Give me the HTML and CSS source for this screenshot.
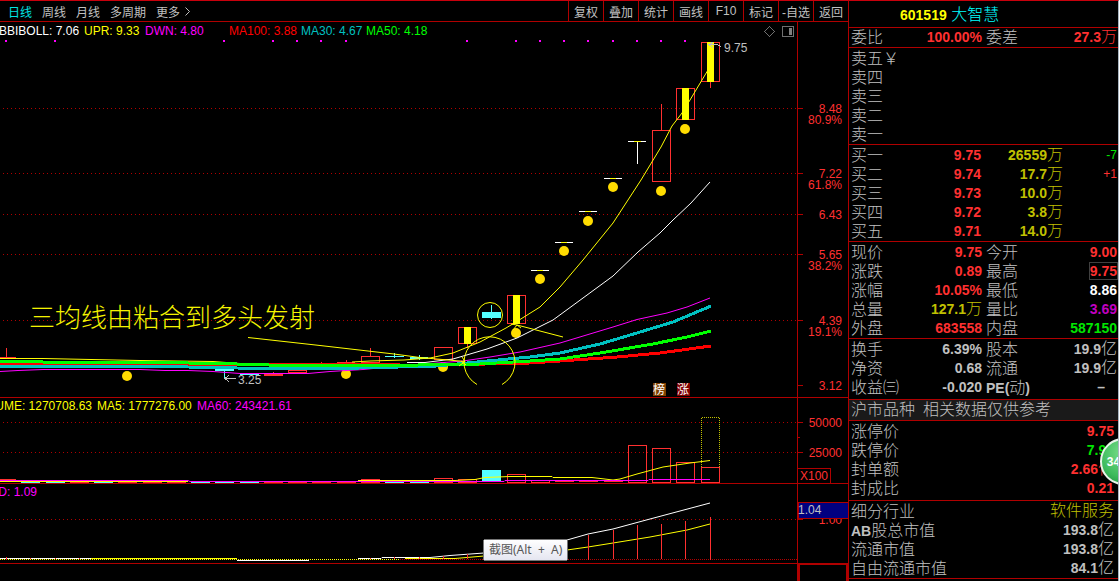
FILE: index.html
```html
<!DOCTYPE html>
<html lang="zh-CN">
<head>
<meta charset="utf-8">
<title>601519 大智慧</title>
<link rel="stylesheet" href="styles.css">
</head>
<body>
<div class="app">
<main class="left">
  <header class="toolbar">
    <nav class="periods">
      <button type="button" class="period active">日线</button>
      <button type="button" class="period">周线</button>
      <button type="button" class="period">月线</button>
      <button type="button" class="period">多周期</button>
      <button type="button" class="period more">更多<svg class="chevron" viewBox="0 0 5 9"><path d="M0.5 0.5L4.5 4.5L0.5 8.5"/></svg></button>
    </nav>
    <nav class="tools">
      <button type="button">复权</button>
      <button type="button">叠加</button>
      <button type="button">统计</button>
      <button type="button">画线</button>
      <button type="button">F10</button>
      <button type="button">标记</button>
      <button type="button">-自选</button>
      <button type="button">返回</button>
    </nav>
  </header>

  <svg class="chart" viewBox="0 22 848 375">
    <g class="grid">
      <path d="M3 108.5H797M3 173.5H797M3 214.5H797M3 254.5H797M3 320.5H797"/>
    </g>
    <path class="frame" d="M797.5 22V397M798 108.5H803M798 173.5H803M798 214.5H803M798 254.5H803M798 320.5H803M798 385.5H803"/>
    <g class="axis">
      <text x="842" y="113">8.48</text><text x="842" y="124">80.9%</text>
      <text x="842" y="178">7.22</text><text x="842" y="189">61.8%</text>
      <text x="842" y="219">6.43</text>
      <text x="842" y="259">5.65</text><text x="842" y="270">38.2%</text>
      <text x="842" y="325">4.39</text><text x="842" y="336">19.1%</text>
      <text x="842" y="390">3.12</text>
    </g>
    <g class="legend">
      <text class="white" x="-1" y="35">BBIBOLL: 7.06</text>
      <text class="yellow" x="84" y="35">UPR: 9.33</text>
      <text class="magenta" x="145" y="35">DWN: 4.80</text>
      <text class="red" x="229" y="35">MA100: 3.88</text>
      <text class="teal" x="301" y="35">MA30: 4.67</text>
      <text class="lime" x="366" y="35">MA50: 4.18</text>
    </g>
    <path class="marks" d="M5 41h2M54 41h2M223 41h2M272 41h2M296 41h2M320 41h2M345 41h2M466 41h2M515 41h2M539 41h2M563 41h2M587 41h2M612 41h2M636 41h2M660 41h2M684 41h2"/>
    <path class="tool-icon" d="M764.5 31.5L769.5 26.5L774.5 31.5L769.5 36.5Z"/>
    <rect class="tool-icon" x="782.5" y="26.5" width="11" height="10" rx="1"/>
    <rect class="tool-fill" x="789" y="28" width="3" height="7"/>

    <g class="dots">
      <circle cx="127" cy="376" r="5"/><circle cx="346" cy="374" r="5"/><circle cx="443" cy="367" r="5"/>
      <circle cx="516" cy="333" r="5"/><circle cx="540" cy="279" r="5"/><circle cx="564" cy="251" r="5"/>
      <circle cx="588" cy="221" r="5"/><circle cx="613" cy="187" r="5"/><circle cx="661" cy="191" r="5"/><circle cx="685" cy="129" r="5"/>
    </g>
    <g class="up">
      <path d="M6.5 348V357M0 357.5H16M337 362.5H355M346.5 360V362M370.5 348V356M467.5 344V348M661.5 104V130M710.5 82V88M321.5 362V364M273.5 372V374"/>
      <rect x="288.5" y="370.5" width="18" height="2"/>
      <rect x="361.5" y="356.5" width="18" height="6"/>
      <rect x="434.5" y="347.5" width="18" height="12"/>
      <rect x="458.5" y="327.5" width="18" height="16"/>
      <rect x="507.5" y="295.5" width="18" height="28"/>
      <rect x="652.5" y="130.5" width="18" height="51"/>
      <rect x="676.5" y="88.5" width="18" height="31"/>
      <rect x="701.5" y="42.5" width="18" height="39"/>
    </g>
    <rect class="up-fill" x="264" y="374" width="19" height="2"/>
    <g class="down">
      <rect x="215" y="369" width="19" height="2"/><rect x="224" y="371" width="1" height="8"/>
      <rect x="240" y="373" width="19" height="2"/>
      <rect x="385" y="356" width="19" height="1"/><rect x="394" y="353" width="1" height="5"/>
      <rect x="410" y="357" width="18" height="2"/><rect x="419" y="355" width="1" height="5"/>
      <rect x="482" y="312" width="19" height="6"/><rect x="491" y="305" width="1" height="14"/>
    </g>
    <path class="line white-line" d="M531 270.5H549M555 242.5H573M579 211.5H597M604 178.5H622M628 141.5H646M637.5 142V164"/>
    <path class="line yellow-line" d="M537 270.5H543M561 242.5H567M585 211.5H591M610 178.5H616M634 141.5H641"/>

    <path class="line yellow-line" d="M0 358.5H43L91 359.5L140 360.5L213 361.5L240 363.5M352 362L370 361L404 360L430 358L453 353L480 342L506 328L516 322L540 307L560 287L583 260L613 223L641 180L661 147L672 126L682 113L690 100L708 70"/>
    <g class="solid">
      <rect x="464" y="327" width="7" height="17"/><rect x="513" y="295" width="7" height="29"/>
      <rect x="682" y="88" width="7" height="32"/><rect x="707" y="42" width="7" height="40"/>
    </g>
    <path class="line magenta-line" d="M0 371.5L18 370.5L43 369.5H140L165 370.5H188L213 371.5L240 373.5H308L330 371.5L363 369.5L404 365.5L463 361L490 357L520 352L560 343L613 327L637 319.5L667 313L687 307L710 298"/>
    <path class="line white-line" d="M407 362.5H425L453 359L487 349L517 338L553 320L613 276L638 252L660 233L673 220L691 203L710 182"/>
    <path class="line thick red-line" d="M0 363L188 364L320 365L440 365L530 363L560 361L617 357L660 353L711 346"/>
    <path class="line thick teal-line" d="M0 366H43L188 367L262 368.5H340L437 366L487 361L530 357L560 353L600 344L627 336L673 322L711 306"/>
    <path class="line thick lime-line" d="M0 361H20L43 362H90L188 363L237 364L285 365.5H400L437 364.5L480 364L530 361L560 359L600 353L653 344L687 337L711 331"/>
    <path class="line red-line" d="M188 365.5H237M286 363.5H400"/>

    <path class="line yellow-line" d="M248 337.5L320 345.5L394 354L420 357.5L465 361.5M459 366L465 361.5L462 357M461 361L466 365M517 325L563 337M517 325L511 324M517 325L513 330M517 325L521 328M477 384.5A25.5 25.5 0 1 1 502 384.5"/>
    <circle class="line yellow-line" cx="490" cy="315" r="12.5"/>
    <path class="note-line" d="M225 378.5H236M229 375L225 378.5L229 382M710 44.5H717L721 46.5M713 42L709 44.5L713 48"/>
    <text class="note" x="724" y="52">9.75</text>
    <text class="note" x="238" y="384">3.25</text>
    <text class="headline" x="29" y="327">三均线由粘合到多头发射</text>
    <rect class="badge-brown" x="653" y="383" width="13" height="13"/><text class="badge-text" x="653" y="394">榜</text>
    <rect class="badge-red" x="677" y="383" width="13" height="13"/><text class="badge-text" x="677" y="394">涨</text>
  </svg>

  <svg class="chart" viewBox="0 397 848 86">
    <path class="grid" d="M3 422.5H797M3 452.5H797"/>
    <path class="frame" d="M0 397.5H848M797.5 397V483M798 422.5H803M798 437.5H800M798 452.5H803M798 468.5H830.5V483"/>
    <g class="axis"><text x="842" y="427">50000</text><text x="842" y="457">25000</text><text x="828" y="480">X100</text></g>
    <g class="legend">
      <text class="yellow end" x="92" y="410">VOLUME: 1270708.63</text>
      <text class="yellow" x="97" y="410">MA5: 1777276.00</text>
      <text class="magenta" x="197" y="410">MA60: 243421.61</text>
    </g>
    <path class="bars-red" d="M0 480H16M70 482H89M118 482H137M143 482H162M167 482H186M264 482H283M288 482H307M312 482H331M337 482H356M361 480H380M361 482H380M555 481H574M579 481H598M604 481H623"/>
    <path class="bars-cyan" d="M21 482H40M46 482H65M94 482H113M191 482H210M215 482H234M240 482H259M385 482H404M410 482H429"/>
    <g class="up">
      <rect x="434.5" y="478.5" width="18" height="4"/><rect x="458.5" y="479.5" width="18" height="3"/>
      <rect x="507.5" y="474.5" width="18" height="8"/><rect x="531.5" y="480.5" width="18" height="2"/>
      <rect x="628.5" y="445.5" width="18" height="37"/><rect x="652.5" y="448.5" width="18" height="34"/>
      <rect x="676.5" y="462.5" width="18" height="20"/><rect x="701.5" y="467.5" width="18" height="15"/>
    </g>
    <g class="down"><rect x="482" y="470" width="19" height="12"/></g>
    <path class="forecast" d="M701.5 467V417.5H719.5V467"/>
    <path class="line yellow-line" d="M0 481.5H188M358 480.5H455L475 479.5L485 477.5L510 476.5H552L553 477.5H592L613 480L620 479L637 474L663 467L690 463L710 460.5"/>
    <path class="line magenta-line" d="M0 480.5H188L190 481.5H504L505 480.5H648L649 479.5H710"/>
  </svg>

  <svg class="chart" viewBox="0 483 848 98">
    <path class="grid" d="M3 519.5H797"/>
    <path class="grid fine" d="M0 559.5H797"/>
    <path class="frame" d="M0 483.5H848M797.5 483V581M798 519.5H803M0 563.5H848"/>
    <path class="frame bold" d="M848 564H799V581M847 563V581"/>
    <g class="legend"><text class="magenta end" x="37" y="496">MACD: 1.09</text></g>
    <g class="axis"><text x="842" y="524">1.00</text></g>
    <rect class="cursor-box" x="798" y="502.5" width="50" height="16"/>
    <text class="note" x="798" y="514">1.04</text>
    <path class="fine yellow-line" d="M0 559.5H400"/>
    <path class="line white-line" d="M0 558.5H91M237 560.5H309M358 558.5H381L382 557.5H430L450 555.5L484 553L567 540L588 534L613 529L650 519L710 503"/>
    <path class="line yellow-line" d="M91 558.5H237M405 558.5H455L484 556L567 550L588 547L613 543L650 537L687 530L710 524"/>
    <path class="up" d="M6.5 557V560M30.5 558V559M55.5 558V559M79.5 558V559M370.5 558V559M394.5 557V559M419.5 557V559M443.5 556V559M467.5 554V559M588.5 535V560M613.5 530V559M637.5 525V559M661.5 524V559M685.5 521V559M710.5 517V560"/>
    <defs><linearGradient id="tip" x1="0" y1="0" x2="0" y2="1"><stop offset="0" stop-color="#ffffff"/><stop offset="1" stop-color="#e4e5f0"/></linearGradient></defs>
    <rect class="tip-box" x="483.5" y="539.5" width="84" height="21" rx="2"/>
    <text class="tip-text" x="489" y="554">截图(Alt&nbsp; +&nbsp; A)</text>
  </svg>
</main>

<aside class="quote">
  <h1 class="title"><b>601519</b> <span>大智慧</span></h1>
  <table class="panel ratio">
    <tr><th>委比</th><td class="r">100.00%</td><th>委差</th><td class="r">27.3<i>万</i></td></tr>
  </table>
  <table class="panel">
    <tr><th>卖五￥</th></tr><tr><th>卖四</th></tr><tr><th>卖三</th></tr><tr><th>卖二</th></tr><tr><th>卖一</th></tr>
  </table>
  <table class="panel bids">
    <colgroup><col class="c-price"><col class="c-price"><col class="c-vol"><col class="c-chg"></colgroup>
    <tr><th>买一</th><td class="r">9.75</td><td class="y">26559<i>万</i></td><td class="chg g">-7</td></tr>
    <tr><th>买二</th><td class="r">9.74</td><td class="y">17.7<i>万</i></td><td class="chg r">+1</td></tr>
    <tr><th>买三</th><td class="r">9.73</td><td class="y">10.0<i>万</i></td><td></td></tr>
    <tr><th>买四</th><td class="r">9.72</td><td class="y">3.8<i>万</i></td><td></td></tr>
    <tr><th>买五</th><td class="r">9.71</td><td class="y">14.0<i>万</i></td><td></td></tr>
  </table>
  <table class="panel">
    <tr><th>现价</th><td class="r">9.75</td><th>今开</th><td class="r">9.00</td></tr>
    <tr><th>涨跌</th><td class="r">0.89</td><th>最高</th><td class="r"><span class="boxed">9.75</span></td></tr>
    <tr><th>涨幅</th><td class="r">10.05%</td><th>最低</th><td class="w">8.86</td></tr>
    <tr><th>总量</th><td class="y">127.1<i>万</i></td><th>量比</th><td class="m">3.69</td></tr>
    <tr><th>外盘</th><td class="r">683558</td><th>内盘</th><td class="g">587150</td></tr>
  </table>
  <table class="panel loose">
    <tr><th>换手</th><td>6.39%</td><th>股本</th><td>19.9<i>亿</i></td></tr>
    <tr><th>净资</th><td>0.68</td><th>流通</th><td>19.9<i>亿</i></td></tr>
    <tr><th>收益㈢</th><td>-0.020</td><th><b>PE(</b>动<b>)</b></th><td class="dash">–</td></tr>
  </table>
  <p class="strip">沪市品种&ensp;相关数据仅供参考</p>
  <table class="panel loose inset">
    <tr><th>涨停价</th><td class="r">9.75</td></tr>
    <tr><th>跌停价</th><td class="g">7.97</td></tr>
    <tr><th>封单额</th><td class="r">2.66<i>亿</i></td></tr>
    <tr><th>封成比</th><td class="r">0.21</td></tr>
  </table>
  <table class="panel inset">
    <tr><th>细分行业</th><td class="y"><i>软件服务</i></td></tr>
    <tr><th><b>AB</b>股总市值</th><td>193.8<i>亿</i></td></tr>
    <tr><th>流通市值</th><td>193.8<i>亿</i></td></tr>
    <tr><th>自由流通市值</th><td>84.1<i>亿</i></td></tr>
  </table>
  <table class="panel"><tr><th>上市日期</th></tr></table>
  <button type="button" class="ball">34</button>
</aside>
</div>
</body>
</html>
```
FILE: styles.css
```css
* { box-sizing: border-box; }
body {
  margin: 0;
  background: #000;
  color: #c0c0c0;
  font: 12px "Liberation Sans", "Noto Sans CJK SC", sans-serif;
}
.app {
  display: grid;
  grid-template-columns: minmax(0, 1fr) 271px;
  height: 100vh;
  overflow: hidden;
}
button {
  margin: 0;
  padding: 0;
  border: 0;
  background: none;
  color: inherit;
  font: inherit;
}

.left { overflow: hidden; }
.toolbar {
  display: flex;
  justify-content: space-between;
  height: 22px;
  border-top: 1px solid #c8000c;
  border-bottom: 1px solid #b00000;
}
.periods { display: flex; gap: 10px; padding-left: 8px; }
.active { color: #00e4e4; }
.more { display: flex; align-items: center; gap: 5px; }
.chevron { width: 5px; height: 9px; fill: none; stroke: #c0c0c0; }
.tools { display: flex; }
.tools button { width: 35px; border-left: 1px solid #b00000; white-space: nowrap; }

.chart { display: block; width: 100%; height: auto; }
.chart path, .chart rect { shape-rendering: crispEdges; }
.chart .line { fill: none; shape-rendering: auto; }
.chart .thick { stroke-width: 3; shape-rendering: crispEdges; }
.grid { fill: none; stroke: #b00000; stroke-dasharray: 1 3; }
.fine { fill: none; stroke-dasharray: 1 1; }
.frame { fill: none; stroke: #b00000; }
.bold { stroke-width: 2; }
.axis text { fill: #ff3030; text-anchor: end; }
.end { text-anchor: end; }
.white { fill: #fff; }
.yellow { fill: #ff0; }
.magenta { fill: #f0f; }
.red { fill: #f00; }
.teal { fill: #00c0c0; }
.lime { fill: #0f0; }
.marks { stroke: #f0f; stroke-width: 2; }
.tool-icon { fill: none; stroke: #707070; }
.tool-fill { fill: #808080; }
.dots { fill: #ffdc00; }
.up { fill: none; stroke: #ff3030; }
.up-fill { fill: #ff3030; }
.down { fill: #54ffff; }
.solid { fill: #ff0; }
.white-line { stroke: #fff; }
.yellow-line { stroke: #ff0; }
.magenta-line { stroke: #f0f; }
.red-line { stroke: #f00; }
.teal-line { stroke: #00c0c0; }
.lime-line { stroke: #0f0; }
.note-line { fill: none; stroke: #c0c0c0; }
.note { fill: #c0c0c0; }
.headline { fill: #f4f400; font-size: 26px; font-weight: 300; font-family: "Noto Sans CJK SC", sans-serif; }
.badge-brown { fill: #804000; }
.badge-red { fill: #800000; }
.badge-text { fill: #fff; }
.bars-red { stroke: #ff3030; stroke-width: 2; }
.bars-cyan { stroke: #54ffff; stroke-width: 1; }
.forecast { fill: none; stroke: #c0c000; stroke-dasharray: 1 1; }
.cursor-box { fill: #000080; stroke: #b00000; }
.tip-box { fill: url(#tip); stroke: #767676; }
.tip-text { fill: #575757; font-family: "Noto Sans", "Noto Sans CJK SC", sans-serif; }

.quote {
  position: relative;
  overflow: hidden;
  border-top: 1px solid #c8000c;
  border-left: 1px solid #b00000;
  border-right: 1px solid #a8b4c0;
}
.title {
  margin: 0;
  height: 26px;
  padding: 0 0 0 51px;
  font-size: 16px;
  line-height: 27px;
  font-weight: 300;
  color: #0ff;
}
.title b { font-size: 14px; font-weight: 700; color: #ff0; }
.panel {
  width: 100%;
  table-layout: fixed;
  border-collapse: separate;
  border-spacing: 0;
  border-top: 1px solid #b00000;
  padding: 1px 1px 0 2px;
}
.ratio { padding-top: 0; }
.loose { padding-bottom: 2px; }
.inset { padding-right: 4px; }
.panel tr { height: 19px; }
.panel th, .panel td { padding: 0; height: 19px; line-height: 19px; white-space: nowrap; }
.panel th { text-align: left; font-size: 16px; font-weight: 300; }
.panel td { padding-right: 2px; text-align: right; font-size: 14px; font-weight: 700; }
.panel td + th { padding-left: 2px; }
.panel th b { font-size: 14px; font-weight: 700; line-height: 14px; }
.panel td:last-child { padding-right: 0; }
.panel i { font-size: 16px; font-weight: 300; font-style: normal; line-height: 14px; }
.c-price { width: 66px; }
.c-vol { width: 82px; }
.panel .chg { font-size: 12px; font-weight: 400; }
.panel .dash:last-child { padding-right: 12px; }
.r { color: #ff3030; }
.y { color: #c0c000; }
.g { color: #00e600; }
.m { color: #c000c0; }
.w { color: #fff; }
.boxed { outline: 1px solid #404040; }
.strip {
  margin: 0;
  height: 21px;
  padding-left: 2px;
  border-top: 1px solid #b00000;
  background: #1a1a1a;
  font-size: 16px;
  font-weight: 300;
  line-height: 20px;
}
.ball {
  position: absolute;
  top: 437px;
  right: -29px;
  width: 47px;
  height: 47px;
  padding-right: 20px;
  border: 2px solid #e8f4e8;
  border-radius: 50%;
  background: radial-gradient(circle at 50% 30%, #7ce08c, #3cba5c 65%, #1c8c3c);
  color: #fff;
  font-size: 12px;
  font-weight: 700;
}
```
